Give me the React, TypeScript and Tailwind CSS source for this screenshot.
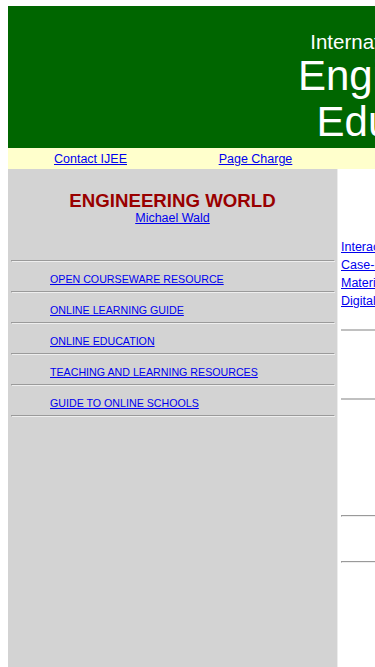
import React from 'react';

const navLinks = ['Contact IJEE', 'Page Charge', 'Editorial Board', 'Subscriptions'];

const worldLinks = [
  'OPEN COURSEWARE RESOURCE',
  'ONLINE LEARNING GUIDE',
  'ONLINE EDUCATION',
  'TEACHING AND LEARNING RESOURCES',
  'GUIDE TO ONLINE SCHOOLS',
];

const issueLinks = [
  'Interactive Learning Environments',
  'Case-Based Teaching',
  'Materials Engineering Education',
  'Digital Libraries',
];

function Rule({ className = '' }: { className?: string }) {
  return (
    <div
      className={`h-[2px] border-t border-l border-t-[#9a9a9a] border-l-[#9a9a9a] border-b border-r border-b-[#eeeeee] border-r-[#eeeeee] ${className}`}
    />
  );
}

function App() {
  return (
    <div className="w-[375px] h-[667px] overflow-hidden bg-white font-['Liberation_Sans',Arial,sans-serif]">
      <div className="w-[812px] pl-2 pt-[6px]">
        {/* Banner */}
        <header className="h-[142px] bg-[#006600] text-white text-center pt-[25px]">
          <div className="text-[20.5px] leading-[22px] pl-[9px]">International Journal of</div>
          <div className="text-[42px] leading-[46px]">Engineering</div>
          <div className="text-[42px] leading-[46px]">Education</div>
        </header>

        {/* Nav */}
        <nav className="h-[21px] bg-[#ffffcc] flex">
          {navLinks.map(link => (
            <div key={link} className="w-[165px] text-center pt-[4px] text-[12.5px] leading-[14px]">
              <a href="#" className="text-[#0000ee] underline">{link}</a>
            </div>
          ))}
        </nav>

        <div className="flex">
          {/* Engineering world column */}
          <aside className="w-[330px] h-[520px] bg-[#d3d3d3] border-r border-[#ececec]">
            <div className="pt-[21px] text-center">
              <h2 className="text-[18.67px] leading-[21px] font-bold text-[#990000]">ENGINEERING WORLD</h2>
              <div className="text-[12.5px] leading-[14px]">
                <a href="#" className="text-[#0000ee] underline">Michael Wald</a>
              </div>
            </div>
            <div className="mt-[35px] ml-[3px] mr-[2px]">
              <Rule />
              {worldLinks.map(link => (
                <div key={link}>
                  <div className="h-[29px] pt-[11px] pl-[39px] text-[10.67px] leading-[12px]">
                    <a href="#" className="text-[#0000ee] underline">{link}</a>
                  </div>
                  <Rule />
                </div>
              ))}
            </div>
          </aside>

          {/* Current issue column */}
          <main className="flex-1 pl-[3px] pt-[69px]">
            <div className="text-[12.5px] leading-[18px] whitespace-nowrap">
              {issueLinks.map(link => (
                <div key={link}>
                  <a href="#" className="text-[#0000ee] underline">{link}</a>
                </div>
              ))}
            </div>
            <div className="mt-[19px] h-[2px] bg-[#c0c0c0]" />
            <div className="mt-[67px] h-[2px] bg-[#c0c0c0]" />
            <Rule className="mt-[115px]" />
            <Rule className="mt-[44px]" />
          </main>
        </div>
      </div>
    </div>
  );
}

export default App;
